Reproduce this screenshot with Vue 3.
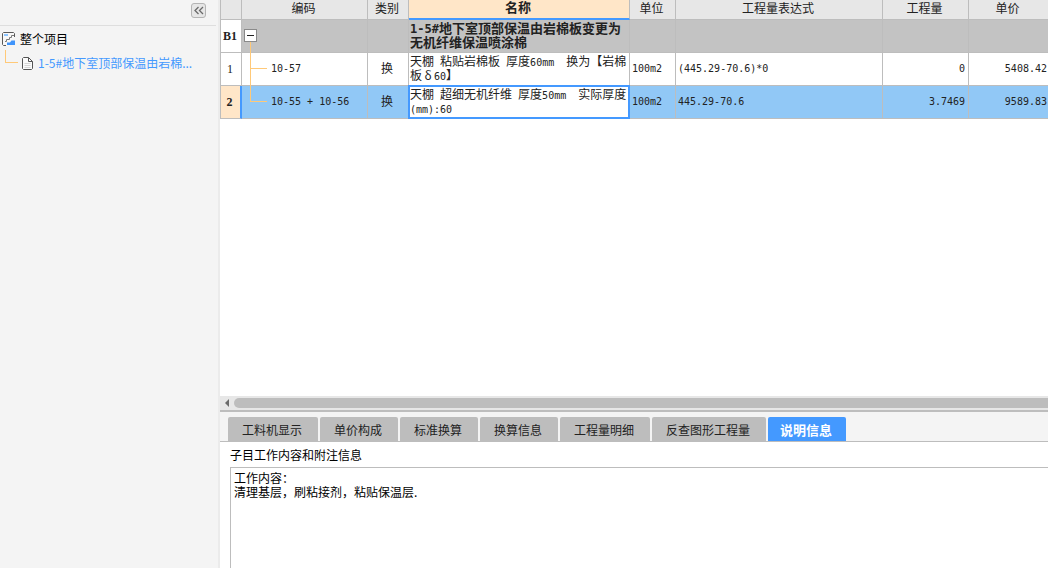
<script setup>
import { ref } from 'vue'

const active = ref('说明信息')
const tabs = ['工料机显示', '单价构成', '标准换算', '换算信息', '工程量明细', '反查图形工程量', '说明信息']
const note = ref('工作内容：\n清理基层，刷粘接剂，粘贴保温层.')

const rows = [
  { no: '1', code: '10-57', kind: '换', name: '天棚 粘贴岩棉板 厚度60mm  换为【岩棉\n板 δ 60】', unit: '100m2', expr: '(445.29-70.6)*0', qty: '0', price: '5408.42' },
  { no: '2', code: '10-55 + 10-56', kind: '换', name: '天棚 超细无机纤维 厚度50mm  实际厚度\n(mm):60', unit: '100m2', expr: '445.29-70.6', qty: '3.7469', price: '9589.83', selected: true }
]

// Splits mixed text so that half-width characters can use the monospace face
const split = (text) =>
  (text.replace(/ δ /g, 'δ').match(/[\x20-\x7e]+|δ|[^\x20-\x7eδ]+/g) || []).map((t) => ({
    t,
    cls: { half: /^[\x20-\x7e]/.test(t), wide: t === 'δ' }
  }))
</script>

<template>
  <div class="app">
    <aside class="side">
      <div class="side-top">
        <button class="collapse" type="button" aria-label="收起">
          <svg width="10" height="9" viewBox="0 0 10 9"><path d="M4.5 1L1 4.5L4.5 8M9 1L5.5 4.5L9 8" fill="none" stroke="#6a6a6a" stroke-width="1.3" /></svg>
        </button>
      </div>
      <ul class="tree">
        <li>
          <a class="root" href="#">
            <svg width="14" height="14" viewBox="0 0 14 14">
              <path d="M12.5 5V1.5L11.5 .5H1.5L.5 1.5V12.5L1.5 13.5H4" fill="#f8f8f8" stroke="#5a5a5a" />
              <path d="M2 3H6" fill="none" stroke="#8ec5ff" stroke-width="2" />
              <path d="M3 9.5H4.5V7.5H7.5V5.5H9.5V3.5H12" fill="none" stroke="#7a7a7a" />
              <path d="M5 13V10.5H8L9.5 8.5H13V13Z" fill="#3f94fb" />
            </svg>
            <span>整个项目</span>
          </a>
          <ul class="sub">
            <li>
              <a class="leaf" href="#">
                <svg width="11" height="13" viewBox="0 0 11 13">
                  <path d="M1.5 .5H6.5L10.5 4.5V11.5L9.5 12.5H1.5L.5 11.5V1.5Z" fill="#fafafa" stroke="#555" />
                  <path d="M6.5 .5V4.5H10.5" fill="none" stroke="#555" />
                  <path d="M2.5 6.5H8.5M2.5 8.5H8.5M2.5 10.5H8.5" stroke="#d5d5d5" />
                </svg>
                <span>1-5#地下室顶部保温由岩棉...</span>
              </a>
            </li>
          </ul>
        </li>
      </ul>
    </aside>

    <main class="main">
      <div class="sheet">
        <table>
          <colgroup>
            <col class="c-no" /><col class="c-code" /><col class="c-kind" /><col class="c-name" />
            <col class="c-unit" /><col class="c-expr" /><col class="c-qty" /><col />
          </colgroup>
          <thead>
            <tr>
              <th></th><th>编码</th><th>类别</th><th class="current">名称</th>
              <th>单位</th><th>工程量表达式</th><th>工程量</th><th>单价</th>
            </tr>
          </thead>
          <tbody>
            <tr class="group">
              <th class="no">B1</th>
              <td class="code">
                <button class="toggle" type="button" aria-label="折叠"></button>
              </td>
              <td></td>
              <td class="name"><span class="half">1-5#</span>地下室顶部保温由岩棉板变更为<br />无机纤维保温喷涂棉</td>
              <td></td><td></td><td></td><td></td>
            </tr>
            <tr v-for="r in rows" :key="r.no" :class="{ selected: r.selected }">
              <th class="no">{{ r.no }}</th>
              <td class="code half">{{ r.code }}</td>
              <td class="kind">{{ r.kind }}</td>
              <td class="name"><span v-for="(s, i) in split(r.name)" :key="i" :class="s.cls">{{ s.t }}</span></td>
              <td class="half">{{ r.unit }}</td>
              <td class="half">{{ r.expr }}</td>
              <td class="half num">{{ r.qty }}</td>
              <td class="half num last">{{ r.price }}</td>
            </tr>
          </tbody>
        </table>
      </div>
      <div class="scroll">
        <button type="button" class="arrow" aria-label="向左滚动">
          <svg width="4" height="8" viewBox="0 0 4 8"><path d="M4 0V8L0 4Z" fill="#6b6b6b" /></svg>
        </button>
        <div class="thumb"></div>
      </div>
      <section class="detail">
        <nav class="tabs">
          <button v-for="t in tabs" :key="t" type="button" :class="{ on: t === active }" @click="active = t">{{ t }}</button>
        </nav>
        <div class="body">
          <label for="note">子目工作内容和附注信息</label>
          <textarea id="note" v-model="note" readonly></textarea>
        </div>
      </section>
    </main>
  </div>
</template>

<style>
body {
  margin: 0;
}
</style>

<style scoped>
.app {
  display: flex;
  height: 100vh;
  overflow: hidden;
  background: #fff;
  color: #222;
  font: 12px/14px "Noto Sans CJK SC", sans-serif;
}
button {
  margin: 0;
  padding: 0;
  border: 0;
  font: inherit;
  color: inherit;
}
.side {
  box-sizing: border-box;
  flex: 0 0 220px;
  background: #f4f4f4;
  border-right: 2px solid #ebebeb;
}
.side-top {
  display: flex;
  justify-content: flex-end;
  height: 22px;
  margin-right: 2px;
  padding: 3px 10px 0 0;
  border-bottom: 1px solid #dedede;
}
.collapse {
  display: grid;
  place-items: center;
  box-sizing: border-box;
  width: 15px;
  height: 15px;
  border: 1px solid #b4b4b4;
  border-radius: 3px;
  background: #e6e6e6;
}
ul {
  list-style: none;
  margin: 0;
  padding: 0;
}
.tree {
  padding-top: 1px;
}
.tree a {
  display: flex;
  align-items: center;
  height: 24px;
  text-decoration: none;
  white-space: nowrap;
}
.tree .root {
  gap: 4px;
  padding-left: 2px;
  color: #000;
}
.sub {
  position: relative;
}
.sub::before {
  content: "";
  position: absolute;
  left: 5px;
  top: -1px;
  width: 12px;
  height: 12px;
  border-left: 1px solid #ffc978;
  border-bottom: 1px solid #ffc978;
}
.tree .leaf {
  gap: 5px;
  padding-left: 22px;
  color: #4499ff;
}
.main {
  display: flex;
  flex: 1;
  flex-direction: column;
  min-width: 0;
}
.sheet {
  flex: 1;
  min-height: 0;
  overflow: hidden;
}
table {
  width: 100%;
  table-layout: fixed;
  border-collapse: separate;
  border-spacing: 0;
  border-left: 1px solid #bdbdbd;
}
.c-no { width: 21px; }
.c-code { width: 126px; }
.c-kind { width: 41px; }
.c-name { width: 221px; }
.c-unit { width: 46px; }
.c-expr { width: 207px; }
.c-qty { width: 86px; }
th,
td {
  box-sizing: border-box;
  padding: 0 2px;
  border-right: 1px solid #bdbdbd;
  border-bottom: 1px solid #bdbdbd;
  white-space: pre;
  text-align: left;
}
tr > :last-child {
  border-right: 0;
}
thead th {
  height: 20px;
  padding: 0 2px 3px 0;
  background: #e7e7e7;
  font-weight: 400;
  text-align: center;
}
thead .current {
  padding-bottom: 4px;
  background: #ffe6c8;
  border-bottom: 2px solid #4499ff;
  font-size: 13px;
  font-weight: 700;
}
tbody tr {
  height: 33px;
}
.half {
  font-family: "DejaVu Sans Mono", "Noto Sans CJK SC", monospace;
  font-size: 10px;
}
span.half {
  line-height: 1px;
}
.wide {
  display: inline-block;
  width: 12px;
  text-align: center;
}
.no {
  padding: 0 2px 0 0;
  background: #fff;
  font: 12px/14px "Liberation Serif", serif;
  text-align: center;
}
.name {
  padding: 0 0 2px 1px;
}
.group {
  background: #c3c3c3;
}
.group .no {
  font-weight: 700;
}
.group .name {
  padding-bottom: 3px;
  font-size: 13px;
  font-weight: 700;
}
.group .half {
  font-size: 12px;
}
.code {
  position: relative;
  padding-left: 29px;
}
.code::before {
  content: "";
  position: absolute;
  left: 8px;
  top: 0;
  bottom: -1px;
  border-left: 1px solid #ffc978;
}
.code::after {
  content: "";
  position: absolute;
  left: 8px;
  top: 15px;
  width: 17px;
  border-top: 1px solid #ffc978;
}
.group .code {
  padding: 0 0 2px 2px;
}
.group .code::before {
  top: 22px;
}
.group .code::after {
  display: none;
}
.selected .code::before {
  bottom: 16px;
}
.toggle {
  display: grid;
  place-items: center;
  box-sizing: border-box;
  width: 13px;
  height: 13px;
  border: 1px solid #8a8a8a;
  background: #fff;
}
.toggle::before {
  content: "";
  width: 7px;
  height: 1px;
  background: #222;
}
.kind {
  padding: 0 2px 2px 0;
  text-align: center;
}
.num {
  padding-right: 3px;
  text-align: right;
}
.last {
  padding-right: 1px;
}
.selected td {
  background: #91c8f6;
}
.selected .no {
  background: #ffe6c8;
  border-right: 2px solid #4499ff;
  font-weight: 700;
}
.selected .name {
  position: relative;
  background: #fff;
}
.selected .name::after {
  content: "";
  position: absolute;
  inset: -1px;
  border: 2px solid #4499ff;
}
.scroll {
  display: flex;
  align-items: center;
  height: 10px;
  border-top: 2px solid #e7e7e7;
  border-bottom: 2px solid #e7e7e7;
  background: #e7e7e7;
}
.arrow {
  display: grid;
  place-items: center;
  width: 14px;
  height: 10px;
  background: none;
}
.thumb {
  flex: 1;
  height: 10px;
  border-radius: 5px 0 0 5px;
  background: #bdbdbd;
}
.detail {
  display: flex;
  flex: 0 0 156px;
  flex-direction: column;
  border-top: 2px solid #bdbdbd;
}
.tabs {
  display: flex;
  gap: 2px;
  padding: 5px 0 0 8px;
  background: #f4f4f4;
  border-bottom: 1px solid #bdbdbd;
}
.tabs button {
  height: 24px;
  padding: 2px 16px 0 14px;
  border-radius: 2px 2px 0 0;
  background: #bdbdbd;
  white-space: nowrap;
}
.tabs .on {
  padding: 1px 14px 0 12px;
  background: #4499ff;
  color: #fff;
  font-size: 13px;
  font-weight: 700;
}
.body {
  display: flex;
  flex: 1;
  flex-direction: column;
  gap: 5px;
  padding: 6px 0 0 10px;
  color: #000;
}
textarea {
  flex: 1;
  box-sizing: border-box;
  margin: 0;
  padding: 3px;
  border: 1px solid #bdbdbd;
  border-width: 1px 0 0 1px;
  outline: 0;
  resize: none;
  background: #fff;
  color: #000;
  font: inherit;
}
</style>
